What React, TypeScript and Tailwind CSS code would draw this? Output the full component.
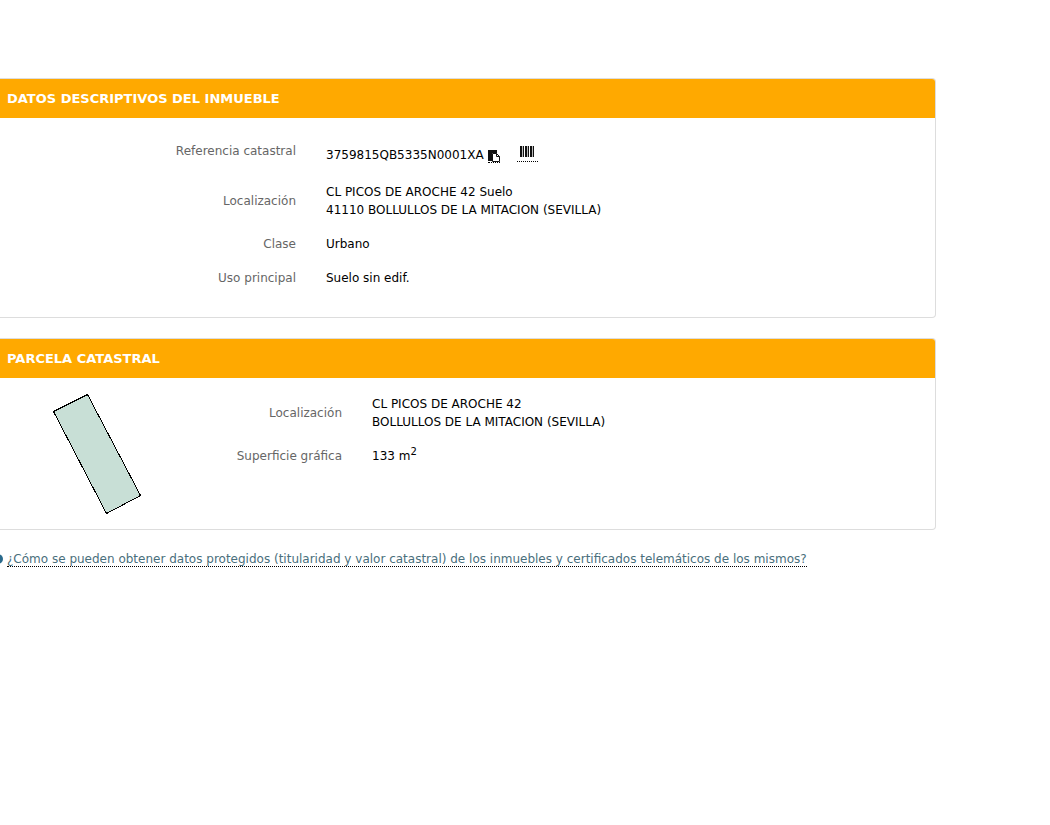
import type { ReactNode } from "react";

type PanelProps = {
  title: string;
  children: ReactNode;
};

function Panel({ title, children }: PanelProps) {
  return (
    <section className="mb-5 overflow-hidden rounded-r border border-l-0 border-[#dddddd] bg-white">
      <h2 className="bg-[#ffa900] px-[7px] py-[10px] text-[13px] leading-[19px] font-bold text-white">
        {title}
      </h2>
      {children}
    </section>
  );
}

type FieldProps = {
  label: string;
  labelWidth: string;
  children: ReactNode;
};

function Field({ label, labelWidth, children }: FieldProps) {
  return (
    <div className="flex items-center gap-[30px]">
      <dt className={`${labelWidth} shrink-0 text-right text-[#666666]`}>{label}</dt>
      <dd className="text-black">{children}</dd>
    </div>
  );
}

function CopyIcon() {
  return (
    <svg width="12" height="13" viewBox="0 0 12 13" aria-hidden="true">
      <path d="M0 1h9v3H4v8H0z" fill="#111" />
      <path d="M4.5 4.5h4l3 3v5h-7z" fill="#fff" stroke="#111" />
      <path d="M8.5 4.5v3h3" fill="none" stroke="#111" />
    </svg>
  );
}

function BarcodeIcon() {
  return (
    <svg width="15" height="11" viewBox="0 0 15 11" shapeRendering="crispEdges" aria-hidden="true">
      <path d="M0 0h2v11H0zM3 0h1v11H3zM5 0h2v11H5zM8 0h1v11H8zM10 0h2v11h-2zM13 0h1v11h-1z" fill="#111" />
      <path d="M2 0h1v11H2zM7 0h1v11H7zM12 0h1v11h-1z" fill="#bbb" />
    </svg>
  );
}

function ParcelShape() {
  return (
    <svg width="90" height="122" viewBox="0 0 90 122" role="img" aria-label="Parcela">
      <path
        d="M1.5 18.5 35.5 1.5 88.5 102.5 54.5 120.5Z"
        fill="#c8dfd6"
        stroke="#000"
        shapeRendering="crispEdges"
      />
    </svg>
  );
}

export default function App() {
  return (
    <main className="overflow-hidden pt-[78px] pr-[114px] font-['DejaVu_Sans',Verdana,sans-serif] text-[12px] leading-[18px]">
      <Panel title="DATOS DESCRIPTIVOS DEL INMUEBLE">
        <dl className="flex flex-col gap-4 pt-6 pb-[30px]">
          <div className="flex items-start gap-[30px] pb-[3px]">
            <dt className="w-[296px] shrink-0 text-right text-[#666666]">Referencia catastral</dt>
            <dd className="flex items-start pt-1 text-black">
              <span>3759815QB5335N0001XA</span>
              <button
                type="button"
                aria-label="Copiar referencia catastral"
                className="ml-1 border-b border-dotted border-black pt-[3px]"
              >
                <CopyIcon />
              </button>
              <a
                href="#codigo"
                aria-label="Código de barras"
                className="ml-[17px] border-b border-dotted border-black px-[3px] pb-1"
              >
                <BarcodeIcon />
              </a>
            </dd>
          </div>
          <Field label="Localización" labelWidth="w-[296px]">
            CL PICOS DE AROCHE 42 Suelo
            <br />
            41110 BOLLULLOS DE LA MITACION (SEVILLA)
          </Field>
          <Field label="Clase" labelWidth="w-[296px]">
            Urbano
          </Field>
          <Field label="Uso principal" labelWidth="w-[296px]">
            Suelo sin edif.
          </Field>
        </dl>
      </Panel>

      <Panel title="PARCELA CATASTRAL">
        <div className="flex items-start pt-[15px] pb-[14px] pl-[52px]">
          <ParcelShape />
          <dl className="flex flex-col gap-4 pt-[2px]">
            <Field label="Localización" labelWidth="w-[200px]">
              CL PICOS DE AROCHE 42
              <br />
              BOLLULLOS DE LA MITACION (SEVILLA)
            </Field>
            <Field label="Superficie gráfica" labelWidth="w-[200px]">
              133 m<sup className="text-[10px]">2</sup>
            </Field>
          </dl>
        </div>
      </Panel>

      <p className="flex items-center">
        <svg width="4" height="12" viewBox="0 0 4 12" className="mr-[3px]" aria-hidden="true">
          <circle cx="-2" cy="6" r="5" fill="#2a6a8c" />
        </svg>
        <a
          href="#ayuda"
          className="border-b border-dotted border-black pt-[2px] leading-[14px] whitespace-nowrap text-[#4a6f7c]"
        >
          ¿Cómo se pueden obtener datos protegidos (titularidad y valor catastral) de los inmuebles y
          certificados telemáticos de los mismos?
        </a>
      </p>
    </main>
  );
}
